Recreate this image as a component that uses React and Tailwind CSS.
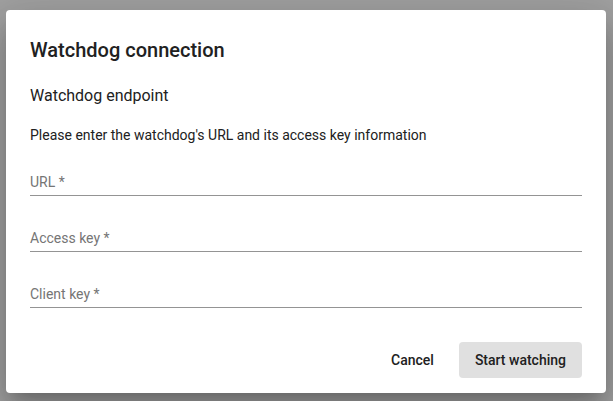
import React from 'react';

const Field = ({ label, className = '' }) => (
  <div className={`pb-[1px] border-b border-[#949494] ${className}`}>
    <div className="text-[14px] leading-[24px] text-[#757575]">{label} *</div>
  </div>
);

export default function App() {
  return (
    <div
      className="w-[613px] h-[401px] bg-[#a1a1a1] overflow-hidden pt-[10px] pl-[6px]"
      style={{ fontFamily: 'Roboto, "Liberation Sans", sans-serif' }}
    >
      <div className="w-[600px] h-[383px] bg-white rounded-[4px] shadow-[0_11px_15px_-7px_rgba(0,0,0,0.2),0_24px_38px_3px_rgba(0,0,0,0.14),0_9px_46px_8px_rgba(0,0,0,0.12)] px-[24px] pt-[24px]">
        <h2 className="text-[20px] leading-[32px] font-medium text-[#212121]">Watchdog connection</h2>
        <div className="mt-[18px] text-[16px] leading-[24px] text-[#212121]">Watchdog endpoint</div>
        <p className="mt-[17px] text-[14px] leading-[20px] text-[#212121]">
          Please enter the watchdog's URL and its access key information
        </p>

        {/* Form fields */}
        <Field label="URL" className="mt-[25px]" />
        <Field label="Access key" className="mt-[30px]" />
        <Field label="Client key" className="mt-[30px]" />

        {/* Actions */}
        <div className="mt-[34px] flex justify-end items-center gap-[17px]">
          <button className="h-[36px] px-[8px] rounded-[4px] text-[14px] font-medium text-[#212121]">
            Cancel
          </button>
          <button className="h-[36px] px-[16px] rounded-[4px] bg-[#e0e0e0] text-[14px] font-medium text-[#212121]">
            Start watching
          </button>
        </div>
      </div>
    </div>
  );
}
